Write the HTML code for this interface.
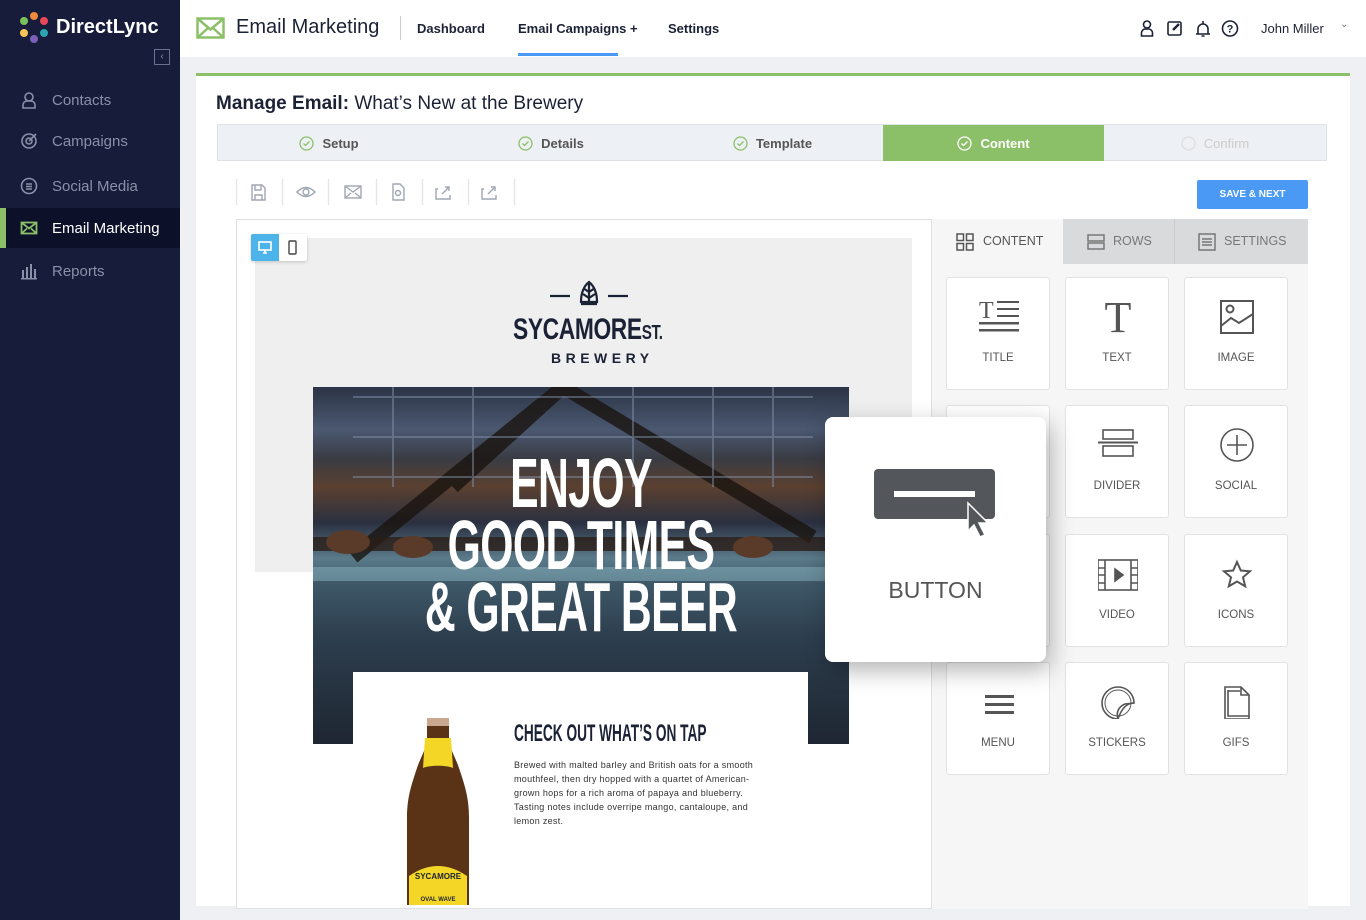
<!DOCTYPE html>
<html><head><meta charset="utf-8"><style>
*{box-sizing:border-box;margin:0;padding:0}
body{width:1366px;height:920px;overflow:hidden;background:#eef0f4;font-family:"Liberation Sans",sans-serif;position:relative}
.abs{position:absolute}
.side{left:0;top:0;width:180px;height:920px;background:#171c3a}
.nav{position:absolute;left:0;width:180px;height:40px;color:#8a90a8;font-size:15px;display:flex;align-items:center;padding-left:52px}
.nav svg{position:absolute;left:20px;top:11px}
.top{left:180px;top:0;width:1186px;height:57px;background:#fff}
.card{left:196px;top:73px;width:1154px;height:833px;background:#fff;border-top:3px solid #8cc068}
.step{position:absolute;top:125px;height:36px;font-size:13px;color:#555;font-weight:bold;display:flex;align-items:center;justify-content:center;gap:8px}
.tile{position:absolute;width:104px;height:113px;background:#fff;border:1px solid #e2e2e2;border-radius:3px;font-size:11.5px;color:#555;text-align:center}
.tile span{position:absolute;left:0;right:0;top:74px}
.tile svg{position:absolute;left:32px;top:20px}
.cond{font-family:"Liberation Sans Narrow","Liberation Sans",sans-serif;font-weight:bold}
</style></head><body>
<div class="abs side"></div>
<svg class="abs" style="left:18px;top:11px" width="32" height="34" viewBox="0 0 32 34"><circle cx="16" cy="5" r="4" fill="#f08a3c"/><circle cx="26" cy="10" r="4" fill="#e8485a"/><circle cx="26" cy="22" r="4" fill="#2aa6b0"/><circle cx="16" cy="28" r="4" fill="#7b5fb8"/><circle cx="6" cy="22" r="4" fill="#f5c35a"/><circle cx="6" cy="10" r="4" fill="#7cc05a"/></svg>
<div class="abs" style="left:56px;top:16px;color:#fff;font-size:20px;font-weight:bold">DirectLync</div>
<div class="abs" style="left:154px;top:49px;width:16px;height:16px;border:1px solid #6a7090;color:#8a90a8;font-size:10px;line-height:14px;text-align:center">‹</div>
<div class="nav" style="top:80px"><svg width="18" height="18" viewBox="0 0 18 18" fill="none" stroke="#8a90a8" stroke-width="1.6"><circle cx="9" cy="6" r="4"/><path d="M3 17v-3a4 4 0 0 1 4-4h4a4 4 0 0 1 4 4v3z"/></svg>Contacts</div>
<div class="nav" style="top:121px"><svg width="18" height="18" viewBox="0 0 18 18" fill="none" stroke="#8a90a8" stroke-width="1.6"><circle cx="9" cy="9" r="7"/><circle cx="9" cy="9" r="3"/><path d="M9 9l7-7"/></svg>Campaigns</div>
<div class="nav" style="top:166px"><svg width="18" height="18" viewBox="0 0 18 18" fill="none" stroke="#8a90a8" stroke-width="1.6"><circle cx="9" cy="9" r="7.5"/><path d="M6 7h6M6 9.5h6M6 12h6"/></svg>Social Media</div>
<div class="abs" style="left:0;top:208px;width:180px;height:40px;background:#0c1029"></div>
<div class="abs" style="left:0;top:208px;width:6px;height:40px;background:#8cc068"></div>
<div class="nav" style="top:208px;color:#fff"><svg width="18" height="18" viewBox="0 0 18 18" fill="none" stroke="#8cc068" stroke-width="1.8"><rect x="1.5" y="3.5" width="15" height="11"/><path d="M1.5 3.5l7.5 6 7.5-6M1.5 14.5l5.5-5M16.5 14.5l-5.5-5"/></svg>Email Marketing</div>
<div class="nav" style="top:251px"><svg width="18" height="18" viewBox="0 0 18 18" fill="#8a90a8"><rect x="2" y="8" width="2" height="8"/><rect x="6" y="5" width="2" height="11"/><rect x="10" y="2" width="2" height="14"/><rect x="14" y="7" width="2" height="9"/><rect x="1" y="16" width="16" height="1.5"/></svg>Reports</div>

<div class="abs top"></div>
<svg class="abs" style="left:196px;top:17px" width="29" height="22" viewBox="0 0 29 22" fill="none" stroke="#8cc068" stroke-width="2.5"><rect x="1.5" y="1.5" width="26" height="19"/><path d="M1.5 1.5l13 11 13-11M1.5 20.5l10-9M27.5 20.5l-10-9"/></svg>
<div class="abs" style="left:236px;top:16px;font-size:20px;color:#1c2236">Email Marketing</div>
<div class="abs" style="left:400px;top:16px;width:1px;height:24px;background:#ccc"></div>
<div class="abs" style="left:417px;top:21px;font-size:13px;font-weight:bold;color:#1c2236">Dashboard</div>
<div class="abs" style="left:518px;top:21px;font-size:13px;font-weight:bold;color:#1c2236">Email Campaigns +</div>
<div class="abs" style="left:518px;top:53px;width:100px;height:3px;background:#4a9af5"></div>
<div class="abs" style="left:668px;top:21px;font-size:13px;font-weight:bold;color:#1c2236">Settings</div>
<svg class="abs" style="left:1138px;top:19px" width="110" height="20" viewBox="0 0 110 20" fill="none" stroke="#1c2236" stroke-width="1.6"><circle cx="9" cy="5.5" r="3.5"/><path d="M3.5 17v-3a4 4 0 0 1 4-4h3a4 4 0 0 1 4 4v3z"/><rect x="30" y="3" width="13" height="13" rx="1.5"/><path d="M35 11l6-6" stroke-width="2.4"/><path d="M58 15h14M60 15v-5a5 5 0 0 1 10 0v5M65 2v3M63.5 17h3"/><circle cx="92" cy="9.5" r="7.5"/><text x="92" y="13.5" font-size="11" text-anchor="middle" fill="#1c2236" stroke="none" font-weight="bold" font-family="Liberation Sans">?</text></svg>
<div class="abs" style="left:1261px;top:21px;font-size:13px;color:#1c2236">John Miller</div>
<div class="abs" style="left:1340px;top:19px;font-size:10px;color:#777">⌄</div>

<div class="abs card"></div>
<div class="abs" style="left:216px;top:93px;font-size:19px;color:#1c2236"><b>Manage Email:</b> What’s New at the Brewery</div>
<div class="abs" style="left:217px;top:124px;width:1110px;height:37px;background:#edf0f4;border:1px solid #dfe3e8"></div>
<div class="step" style="left:218px;width:222px"><svg width="15" height="15"><circle cx="7.5" cy="7.5" r="6.5" fill="none" stroke="#8cc068" stroke-width="1.3"/><path d="M4.5 7.5l2 2 4-4" fill="none" stroke="#8cc068" stroke-width="1.3"/></svg>Setup</div>
<div class="step" style="left:440px;width:222px"><svg width="15" height="15"><circle cx="7.5" cy="7.5" r="6.5" fill="none" stroke="#8cc068" stroke-width="1.3"/><path d="M4.5 7.5l2 2 4-4" fill="none" stroke="#8cc068" stroke-width="1.3"/></svg>Details</div>
<div class="step" style="left:662px;width:221px"><svg width="15" height="15"><circle cx="7.5" cy="7.5" r="6.5" fill="none" stroke="#8cc068" stroke-width="1.3"/><path d="M4.5 7.5l2 2 4-4" fill="none" stroke="#8cc068" stroke-width="1.3"/></svg>Template</div>
<div class="step" style="left:883px;width:221px;background:#8cc068;color:#fff"><svg width="15" height="15"><circle cx="7.5" cy="7.5" r="6.5" fill="none" stroke="#fff" stroke-width="1.3"/><path d="M4.5 7.5l2 2 4-4" fill="none" stroke="#fff" stroke-width="1.3"/></svg>Content</div>
<div class="step" style="left:1104px;width:222px;color:#ccc;font-weight:normal"><svg width="15" height="15"><circle cx="7.5" cy="7.5" r="6.5" fill="none" stroke="#ddd" stroke-width="1.3"/></svg>Confirm</div>

<svg class="abs" style="left:236px;top:177px" width="280" height="30" viewBox="0 0 280 30" fill="none" stroke="#a0a6b4" stroke-width="1.4"><path d="M0.5 2v26M46.5 2v26M92.5 2v26M140.5 2v26M186.5 2v26M232.5 2v26M278.5 2v26" stroke="#e4e6ea"/><path d="M16 8h10l3 3v12H16z M19 8v5h6V8 M19 23v-5h7v5"/><path d="M61 15q9-9 18 0q-9 9-18 0z"/><circle cx="70" cy="15" r="3"/><rect x="109" y="9" width="16" height="12"/><path d="M109 9l8 6 8-6M109 21l6-5M125 21l-6-5"/><path d="M157 7h7l4 4v12h-11z"/><circle cx="162" cy="16" r="2.5"/><path d="M202 12h-2v10h14v-4M206 17l7-7M209 10h4v4"/><path d="M248 12h-2v10h14v-4M252 17l7-7M255 10h4v4"/></svg>
<div class="abs" style="left:1197px;top:180px;width:111px;height:29px;background:#4a9af5;border-radius:2px;color:#fff;font-size:10px;font-weight:bold;text-align:center;line-height:29px">SAVE &amp; NEXT</div>

<div class="abs" style="left:236px;top:219px;width:696px;height:690px;border:1px solid #e0e0e0;background:#fff"></div>
<div class="abs" style="left:255px;top:238px;width:657px;height:334px;background:#efefef"></div>
<div class="abs" style="left:251px;top:234px;width:56px;height:27px;background:#fff;border-radius:2px;box-shadow:0 1px 3px rgba(0,0,0,.2)"></div>
<div class="abs" style="left:251px;top:234px;width:28px;height:27px;background:#4db4ea;border-radius:2px 0 0 2px"></div>
<svg class="abs" style="left:258px;top:240px" width="44" height="16" viewBox="0 0 44 16" fill="none"><rect x="1" y="2" width="12" height="8" stroke="#fff" stroke-width="1.6"/><path d="M5 13h4M7 10v3" stroke="#fff" stroke-width="1.6"/><rect x="31" y="1" width="7" height="13" rx="1" stroke="#444" stroke-width="1.4"/></svg>
<svg class="abs" style="left:548px;top:274px" width="82" height="40" viewBox="0 0 82 40" fill="none" stroke="#1c2236" stroke-width="2.2"><path d="M2 22h20M60 22h20"/><path d="M33 28c0-10 3-16 8-20c5 4 8 10 8 20zM41 8v22M35 20l6 4l6-4M35 14l6 4l6-4M33 30h16"/></svg>
<div class="abs cond" style="left:513px;top:313px;font-size:30px;color:#1c2236;transform:scaleX(.76);transform-origin:left;letter-spacing:-0.5px;white-space:nowrap">SYCAMORE<span style="font-size:20px">ST.</span></div>
<div class="abs" style="left:551px;top:350px;font-size:14px;font-weight:bold;color:#1c2236;letter-spacing:4.5px">BREWERY</div>

<div class="abs" style="left:313px;top:387px;width:536px;height:357px;background:linear-gradient(180deg,#2c3446 0%,#4a5870 12%,#3a3c44 20%,#5b4030 28%,#2a3040 38%,#5a7a8a 48%,#3e5868 55%,#2d3e4e 70%,#1e2632 100%)"></div>
<svg class="abs" style="left:313px;top:387px" width="536" height="357" viewBox="0 0 536 357"><g stroke="#1a1410" stroke-width="14" opacity=".8"><path d="M40 170L250 0M250 0L500 150M140 100L250 0"/></g><g stroke="#8090a8" stroke-width="2" opacity=".5"><path d="M40 10h460M40 50h460M40 90h460M80 0v100M160 0v100M320 0v100M400 0v100M460 0v100"/></g><rect x="0" y="150" width="536" height="14" fill="#2a1e18" opacity=".8"/><rect x="0" y="180" width="536" height="14" fill="#8ab4c0" opacity=".5"/><g fill="#5a3a28"><ellipse cx="35" cy="155" rx="22" ry="12"/><ellipse cx="100" cy="160" rx="20" ry="11"/><ellipse cx="440" cy="160" rx="20" ry="11"/></g></svg>
<div class="abs cond" style="left:313px;top:452px;width:536px;text-align:center;color:#fff;font-size:70px;line-height:62px;transform:scaleX(.61);letter-spacing:-1px">ENJOY<br>GOOD TIMES<br>&amp; GREAT BEER</div>
<div class="abs" style="left:353px;top:672px;width:455px;height:233px;background:#fff"></div>
<div class="abs cond" style="left:514px;top:720px;font-size:24px;color:#1c2236;transform:scaleX(.57);transform-origin:left;white-space:nowrap">CHECK OUT WHAT’S ON TAP</div>
<div class="abs" style="left:514px;top:758px;width:258px;font-size:9px;line-height:14px;color:#333;letter-spacing:.3px">Brewed with malted barley and British oats for a smooth mouthfeel, then dry hopped with a quartet of American-grown hops for a rich aroma of papaya and blueberry. Tasting notes include overripe mango, cantaloupe, and lemon zest.</div>
<svg class="abs" style="left:405px;top:716px" width="66" height="189" viewBox="0 0 66 189"><path d="M22 2h22v20c0 10 6 18 10 30c6 18 10 30 10 50v87H2v-87c0-20 4-32 10-50c4-12 10-20 10-30z" fill="#5a3216"/><rect x="22" y="2" width="22" height="8" fill="#caa890"/><path d="M20 22h26l2 30c-6-3-24-3-30 0z" fill="#f3d626"/><path d="M4 160q29-20 58 0v29H4z" fill="#f3d626"/><text x="33" y="163" font-size="8" font-weight="bold" text-anchor="middle" fill="#1c2236" font-family="Liberation Sans">SYCAMORE</text><text x="33" y="185" font-size="6" font-weight="bold" text-anchor="middle" fill="#1c2236" font-family="Liberation Sans">OVAL WAVE</text></svg>

<!-- right panel -->
<div class="abs" style="left:931px;top:219px;width:377px;height:690px;background:#f6f6f6;border-left:1px solid #e0e0e0"></div>
<div class="abs" style="left:1063px;top:219px;width:245px;height:45px;background:#d9dadc"></div>
<div class="abs" style="left:1174px;top:219px;width:1px;height:45px;background:#ccc"></div>
<div class="abs" style="left:933px;top:219px;width:130px;height:45px;background:#f6f6f6"></div>
<svg class="abs" style="left:956px;top:233px" width="300" height="18" viewBox="0 0 300 18" fill="none" stroke="#555" stroke-width="1.5"><rect x="1" y="1" width="6.5" height="6.5"/><rect x="10.5" y="1" width="6.5" height="6.5"/><rect x="1" y="10.5" width="6.5" height="6.5"/><rect x="10.5" y="10.5" width="6.5" height="6.5"/><g stroke="#777"><rect x="132" y="2" width="16" height="6"/><rect x="132" y="10" width="16" height="6"/><rect x="243" y="1" width="16" height="16"/><path d="M246 6h10M246 9h10M246 12h10"/></g></svg>
<div class="abs" style="left:983px;top:234px;font-size:12.5px;color:#555">CONTENT</div>
<div class="abs" style="left:1113px;top:234px;font-size:12.5px;color:#777">ROWS</div>
<div class="abs" style="left:1224px;top:234px;font-size:12.5px;color:#777">SETTINGS</div>

<div class="tile" style="left:946px;top:277px"><svg width="40" height="36" viewBox="0 0 40 36" fill="#555"><text x="0" y="20" font-size="24" font-family="Liberation Serif">T</text><rect x="18" y="3" width="22" height="2"/><rect x="18" y="10" width="22" height="2"/><rect x="18" y="17" width="22" height="2"/><rect x="0" y="24" width="40" height="2.5"/><rect x="0" y="31" width="40" height="2.5"/></svg><span>TITLE</span></div>
<div class="tile" style="left:1065px;top:277px"><svg width="40" height="36" viewBox="0 0 40 36" fill="#555"><text x="20" y="34" font-size="44" text-anchor="middle" font-family="Liberation Serif">T</text></svg><span>TEXT</span></div>
<div class="tile" style="left:1184px;top:277px"><svg width="40" height="36" viewBox="0 0 40 36" fill="none" stroke="#555" stroke-width="2"><rect x="4" y="3" width="32" height="32"/><circle cx="13" cy="11" r="3.5"/><path d="M4 28l10-8 8 5 14-9"/></svg><span>IMAGE</span></div>
<div class="tile" style="left:946px;top:405px"></div>
<div class="tile" style="left:1065px;top:405px"><svg width="40" height="36" viewBox="0 0 40 36" fill="none" stroke="#555" stroke-width="1.6"><rect x="5" y="4" width="30" height="9"/><rect x="5" y="20" width="30" height="10"/><path d="M0 16.5h40" stroke-width="2"/></svg><span>DIVIDER</span></div>
<div class="tile" style="left:1184px;top:405px"><svg width="40" height="36" viewBox="0 0 40 36" fill="none" stroke="#555" stroke-width="1.6"><circle cx="20" cy="19" r="16"/><path d="M20 9v20M10 19h20"/></svg><span>SOCIAL</span></div>
<div class="tile" style="left:946px;top:534px"></div>
<div class="tile" style="left:1065px;top:534px"><svg width="40" height="36" viewBox="0 0 40 36" fill="none" stroke="#555" stroke-width="1.6"><rect x="0" y="5" width="40" height="30"/><path d="M7 5v30M33 5v30M0 13h7M0 20h7M0 28h7M33 13h7M33 20h7M33 28h7"/><path d="M17 14l8 6-8 6z" fill="#555"/></svg><span>VIDEO</span></div>
<div class="tile" style="left:1184px;top:534px"><svg width="40" height="36" viewBox="0 0 40 36" fill="none" stroke="#555" stroke-width="2"><path d="M20 7l3.8 8.5 9.2.8-7 6 2.2 9-8.2-4.8-8.2 4.8 2.2-9-7-6 9.2-.8z"/></svg><span>ICONS</span></div>
<div class="tile" style="left:946px;top:662px"><svg width="40" height="36" viewBox="0 0 40 36" fill="#555"><rect x="6" y="12" width="29" height="3"/><rect x="6" y="20" width="29" height="3"/><rect x="6" y="28" width="29" height="3"/></svg><span>MENU</span></div>
<div class="tile" style="left:1065px;top:662px"><svg width="40" height="36" viewBox="0 0 40 36" fill="none" stroke="#555" stroke-width="1.6"><path d="M20 36A16 16 0 1 1 36 20c-6 0-12 4-16 16z"/><path d="M20 36c-2-6 0-12 7-15l9-1"/><circle cx="20" cy="20" r="13" stroke-width="1"/></svg><span>STICKERS</span></div>
<div class="tile" style="left:1184px;top:662px"><svg width="40" height="36" viewBox="0 0 40 36" fill="none" stroke="#555" stroke-width="1.6"><path d="M8 4h16l8 8v24H8z"/><path d="M11 8h12M24 4v8h8"/><path d="M11 7v26h21"/></svg><span>GIFS</span></div>

<div class="abs" style="left:825px;top:417px;width:221px;height:245px;background:#fff;border-radius:8px;box-shadow:4px 8px 24px rgba(0,0,0,.3)"></div>
<svg class="abs" style="left:874px;top:467px" width="124" height="74" viewBox="0 0 124 74"><rect x="0" y="2" width="121" height="50" rx="4" fill="#53575c"/><rect x="20" y="24" width="81" height="6" fill="#fff"/><path d="M94 36l0 28 6-6 6 12 5-2-6-12 9 0z" fill="#53575c" stroke="#fff" stroke-width="1.5"/></svg>
<div class="abs" style="left:825px;top:577px;width:221px;text-align:center;font-size:23px;color:#555">BUTTON</div>
</body></html>
